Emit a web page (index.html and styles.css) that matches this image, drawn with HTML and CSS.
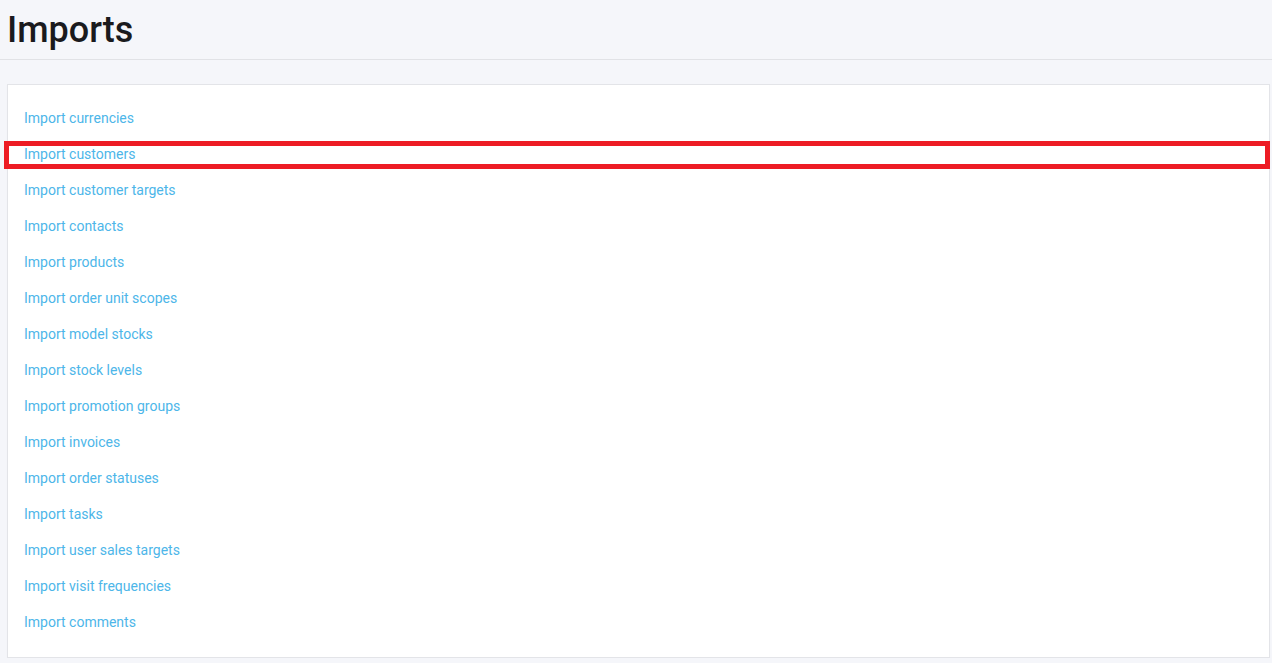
FILE: index.html
```html
<!DOCTYPE html>
<html lang="en">
<head>
<meta charset="utf-8">
<title>Imports</title>
<link rel="stylesheet" href="styles.css">
</head>
<body>
<header class="page-header">
  <h1 class="page-title">Imports</h1>
</header>
<main class="page-content">
  <section class="card">
    <ul class="import-list">
      <li class="import-item"><a class="import-link" href="#">Import currencies</a></li>
      <li class="import-item"><a class="import-link" href="#">Import customers</a><span class="highlight"></span></li>
      <li class="import-item"><a class="import-link" href="#">Import customer targets</a></li>
      <li class="import-item"><a class="import-link" href="#">Import contacts</a></li>
      <li class="import-item"><a class="import-link" href="#">Import products</a></li>
      <li class="import-item"><a class="import-link" href="#">Import order unit scopes</a></li>
      <li class="import-item"><a class="import-link" href="#">Import model stocks</a></li>
      <li class="import-item"><a class="import-link" href="#">Import stock levels</a></li>
      <li class="import-item"><a class="import-link" href="#">Import promotion groups</a></li>
      <li class="import-item"><a class="import-link" href="#">Import invoices</a></li>
      <li class="import-item"><a class="import-link" href="#">Import order statuses</a></li>
      <li class="import-item"><a class="import-link" href="#">Import tasks</a></li>
      <li class="import-item"><a class="import-link" href="#">Import user sales targets</a></li>
      <li class="import-item"><a class="import-link" href="#">Import visit frequencies</a></li>
      <li class="import-item"><a class="import-link" href="#">Import comments</a></li>
    </ul>
  </section>
</main>
</body>
</html>
```
FILE: styles.css
```css
html, body {
  margin: 0;
  padding: 0;
}
body {
  background: #f5f6fa;
  font-family: Roboto, "Liberation Sans", Arial, sans-serif;
  color: #1c1c1f;
  overflow: hidden;
}
.page-header {
  height: 59px;
  box-sizing: content-box;
  border-bottom: 1px solid #e1e2e6;
  padding: 0 7px;
}
.page-title {
  margin: 0;
  padding-top: 9px;
  font-size: 36px;
  font-weight: 500;
  line-height: 42px;
  color: #1a1a1d;
}
.page-content {
  padding: 24px 2px 0 7px;
}
.card {
  background: #ffffff;
  border: 1px solid #e3e4e8;
  box-shadow: 0 1px 1px rgba(0, 0, 0, 0.03);
  padding: 15px 0 17px 16px;
}
.import-list {
  list-style: none;
  margin: 0;
  padding: 0;
}
.import-item {
  position: relative;
  height: 36px;
  display: flex;
  align-items: center;
}
.import-link {
  font-size: 14px;
  line-height: 16px;
  color: #4db6e9;
  text-decoration: none;
}
.highlight {
  position: absolute;
  left: -20px;
  right: -1px;
  top: 5px;
  bottom: 3px;
  border: 5px solid #ed1c24;
  pointer-events: none;
}
```
